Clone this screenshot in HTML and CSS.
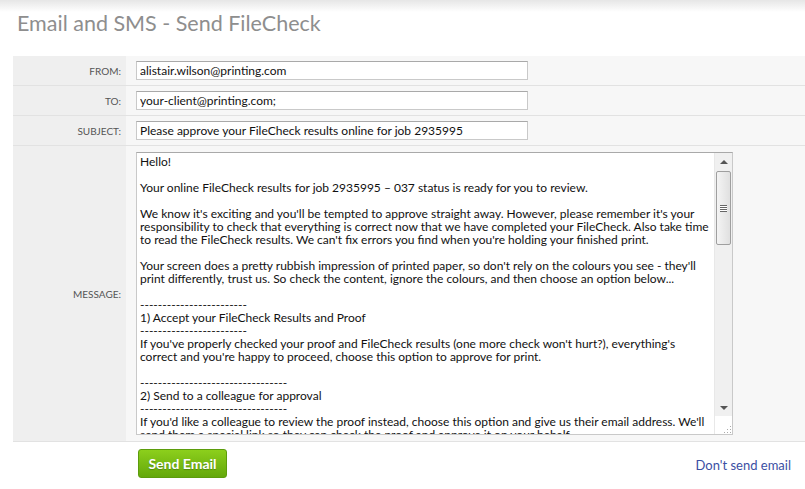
FILE: index.html
```html
<!DOCTYPE html>
<html lang="en">
<head>
    <meta charset="UTF-8">
    <title>Email and SMS - Send FileCheck</title>
    <link rel="stylesheet" href="styles.css">
</head>
<body>
    <h1 class="page-title">Email and SMS - Send FileCheck</h1>

    <form class="send-form">
        <div class="form-row">
            <label class="form-label" for="from">From:</label>
            <div class="form-field">
                <input class="text-input" type="text" id="from" value="alistair.wilson@printing.com">
            </div>
        </div>
        <div class="form-row">
            <label class="form-label" for="to">To:</label>
            <div class="form-field">
                <input class="text-input" type="text" id="to" value="your-client@printing.com;">
            </div>
        </div>
        <div class="form-row">
            <label class="form-label" for="subject">Subject:</label>
            <div class="form-field">
                <input class="text-input" type="text" id="subject" value="Please approve your FileCheck results online for job 2935995">
            </div>
        </div>
        <div class="form-row message-row">
            <label class="form-label">Message:</label>
            <div class="form-field">
                <div class="message-box">
<div class="message-text">Hello!

Your online FileCheck results for job 2935995 – 037 status is ready for you to review.

We know it's exciting and you'll be tempted to approve straight away. However, please remember it's your
responsibility to check that everything is correct now that we have completed your FileCheck. Also take time
to read the FileCheck results. We can't fix errors you find when you're holding your finished print.

Your screen does a pretty rubbish impression of printed paper, so don't rely on the colours you see - they'll
print differently, trust us. So check the content, ignore the colours, and then choose an option below...

------------------------
1) Accept your FileCheck Results and Proof
------------------------
If you've properly checked your proof and FileCheck results (one more check won't hurt?), everything's
correct and you're happy to proceed, choose this option to approve for print.

---------------------------------
2) Send to a colleague for approval
---------------------------------
If you'd like a colleague to review the proof instead, choose this option and give us their email address. We'll
send them a special link so they can check the proof and approve it on your behalf.</div>
                    <div class="scrollbar">
                        <div class="scroll-btn"><span class="arrow-up"></span></div>
                        <div class="scroll-track">
                            <div class="scroll-thumb"><span class="grip"></span></div>
                        </div>
                        <div class="scroll-btn"><span class="arrow-down"></span></div>
                        <div class="resizer">
                            <svg width="9" height="9" viewBox="0 0 9 9">
                                <rect x="7" y="1" width="1" height="1" fill="#aaa"/>
                                <rect x="4" y="4" width="1" height="1" fill="#aaa"/>
                                <rect x="7" y="4" width="1" height="1" fill="#aaa"/>
                                <rect x="1" y="7" width="1" height="1" fill="#aaa"/>
                                <rect x="4" y="7" width="1" height="1" fill="#aaa"/>
                                <rect x="7" y="7" width="1" height="1" fill="#aaa"/>
                            </svg>
                        </div>
                    </div>
                </div>
            </div>
        </div>

        <div class="form-actions">
            <button class="send-btn" type="button">Send Email</button>
            <a class="cancel-link" href="#">Don't send email</a>
        </div>
    </form>
</body>
</html>
```

FILE: styles.css
```css
body {
    margin: 0;
    font-family: Lato, "Open Sans", Arial, sans-serif;
    background: linear-gradient(#e6e6e6, #ffffff 12px) no-repeat;
    background-color: #fff;
}

.page-title {
    margin: 0;
    padding: 10px 0 0 17px;
    height: 56px;
    box-sizing: border-box;
    font-size: 21.5px;
    font-weight: normal;
    color: #8e8e8e;
}

.send-form {
    margin-left: 13px;
}

.form-row {
    display: flex;
    border-bottom: 1px solid #e2e2e2;
}

.form-label {
    width: 113px;
    flex-shrink: 0;
    box-sizing: border-box;
    padding-right: 5px;
    background-color: #efefef;
    text-align: right;
    text-transform: uppercase;
    font-size: 10px;
    color: #555;
    display: flex;
    align-items: center;
    justify-content: flex-end;
}

.form-field {
    flex: 1;
    background-color: #f7f7f7;
    padding: 5px 10px;
}

.text-input {
    display: block;
    width: 392px;
    height: 19px;
    box-sizing: border-box;
    margin: 0;
    padding: 0 3px;
    border: 1px solid #c9c9c9;
    border-top-color: #a9a9a9;
    background: #fff;
    font-family: Lato, "Open Sans", Arial, sans-serif;
    font-size: 12px;
    color: #111;
}

.message-row .form-field {
    padding: 6px 10px 6px 10px;
}

.message-box {
    display: flex;
    width: 597px;
    height: 283px;
    box-sizing: border-box;
    border: 1px solid #c9c9c9;
    border-top-color: #a9a9a9;
    background: #fff;
}

.message-text {
    flex: 1;
    overflow: hidden;
    padding: 2px 3px;
    white-space: pre;
    font-size: 12px;
    line-height: 13px;
    color: #111;
}

.scrollbar {
    width: 17px;
    display: flex;
    flex-direction: column;
    background-color: #f0f0f0;
    border-left: 1px solid #e8e8e8;
}

.scroll-btn {
    height: 17px;
    display: flex;
    align-items: center;
    justify-content: center;
}

.arrow-up {
    width: 0;
    height: 0;
    border-left: 4px solid transparent;
    border-right: 4px solid transparent;
    border-bottom: 4px solid #555;
}

.arrow-down {
    width: 0;
    height: 0;
    border-left: 4px solid transparent;
    border-right: 4px solid transparent;
    border-top: 4px solid #555;
}

.scroll-track {
    flex: 1;
    padding-top: 1px;
}

.scroll-thumb {
    margin: 0 1px;
    height: 72px;
    border: 1px solid #9f9f9f;
    border-radius: 2px;
    background: linear-gradient(to right, #f4f4f4, #e0e0e0);
    display: flex;
    align-items: center;
    justify-content: center;
}

.grip {
    width: 7px;
    height: 7px;
    box-sizing: border-box;
    border-top: 1px solid #666;
    border-bottom: 1px solid #666;
    background: linear-gradient(#fff 0 1px, #666 1px 2px, #fff 2px 3px, #666 3px 4px, #fff 4px);
    background-size: 7px 5px;
}

.resizer {
    height: 18px;
    background: #fff;
    display: flex;
    align-items: flex-end;
    justify-content: flex-end;
}

.resizer svg {
    display: block;
}

.form-actions {
    display: flex;
    justify-content: space-between;
    align-items: center;
    padding: 7px 14px 0 125px;
}

.send-btn {
    width: 89px;
    height: 29px;
    padding: 0;
    border: 1px solid #5c9c0c;
    border-radius: 3px;
    background: linear-gradient(#8ccf1c, #64a80b);
    color: #fff;
    font-family: Lato, "Open Sans", Arial, sans-serif;
    font-size: 14px;
    font-weight: bold;
    text-shadow: 0 1px 1px rgba(0, 0, 0, 0.25);
    cursor: pointer;
}

.cancel-link {
    font-size: 13px;
    color: #3b4fa3;
    text-decoration: none;
    padding-top: 2px;
}
```
